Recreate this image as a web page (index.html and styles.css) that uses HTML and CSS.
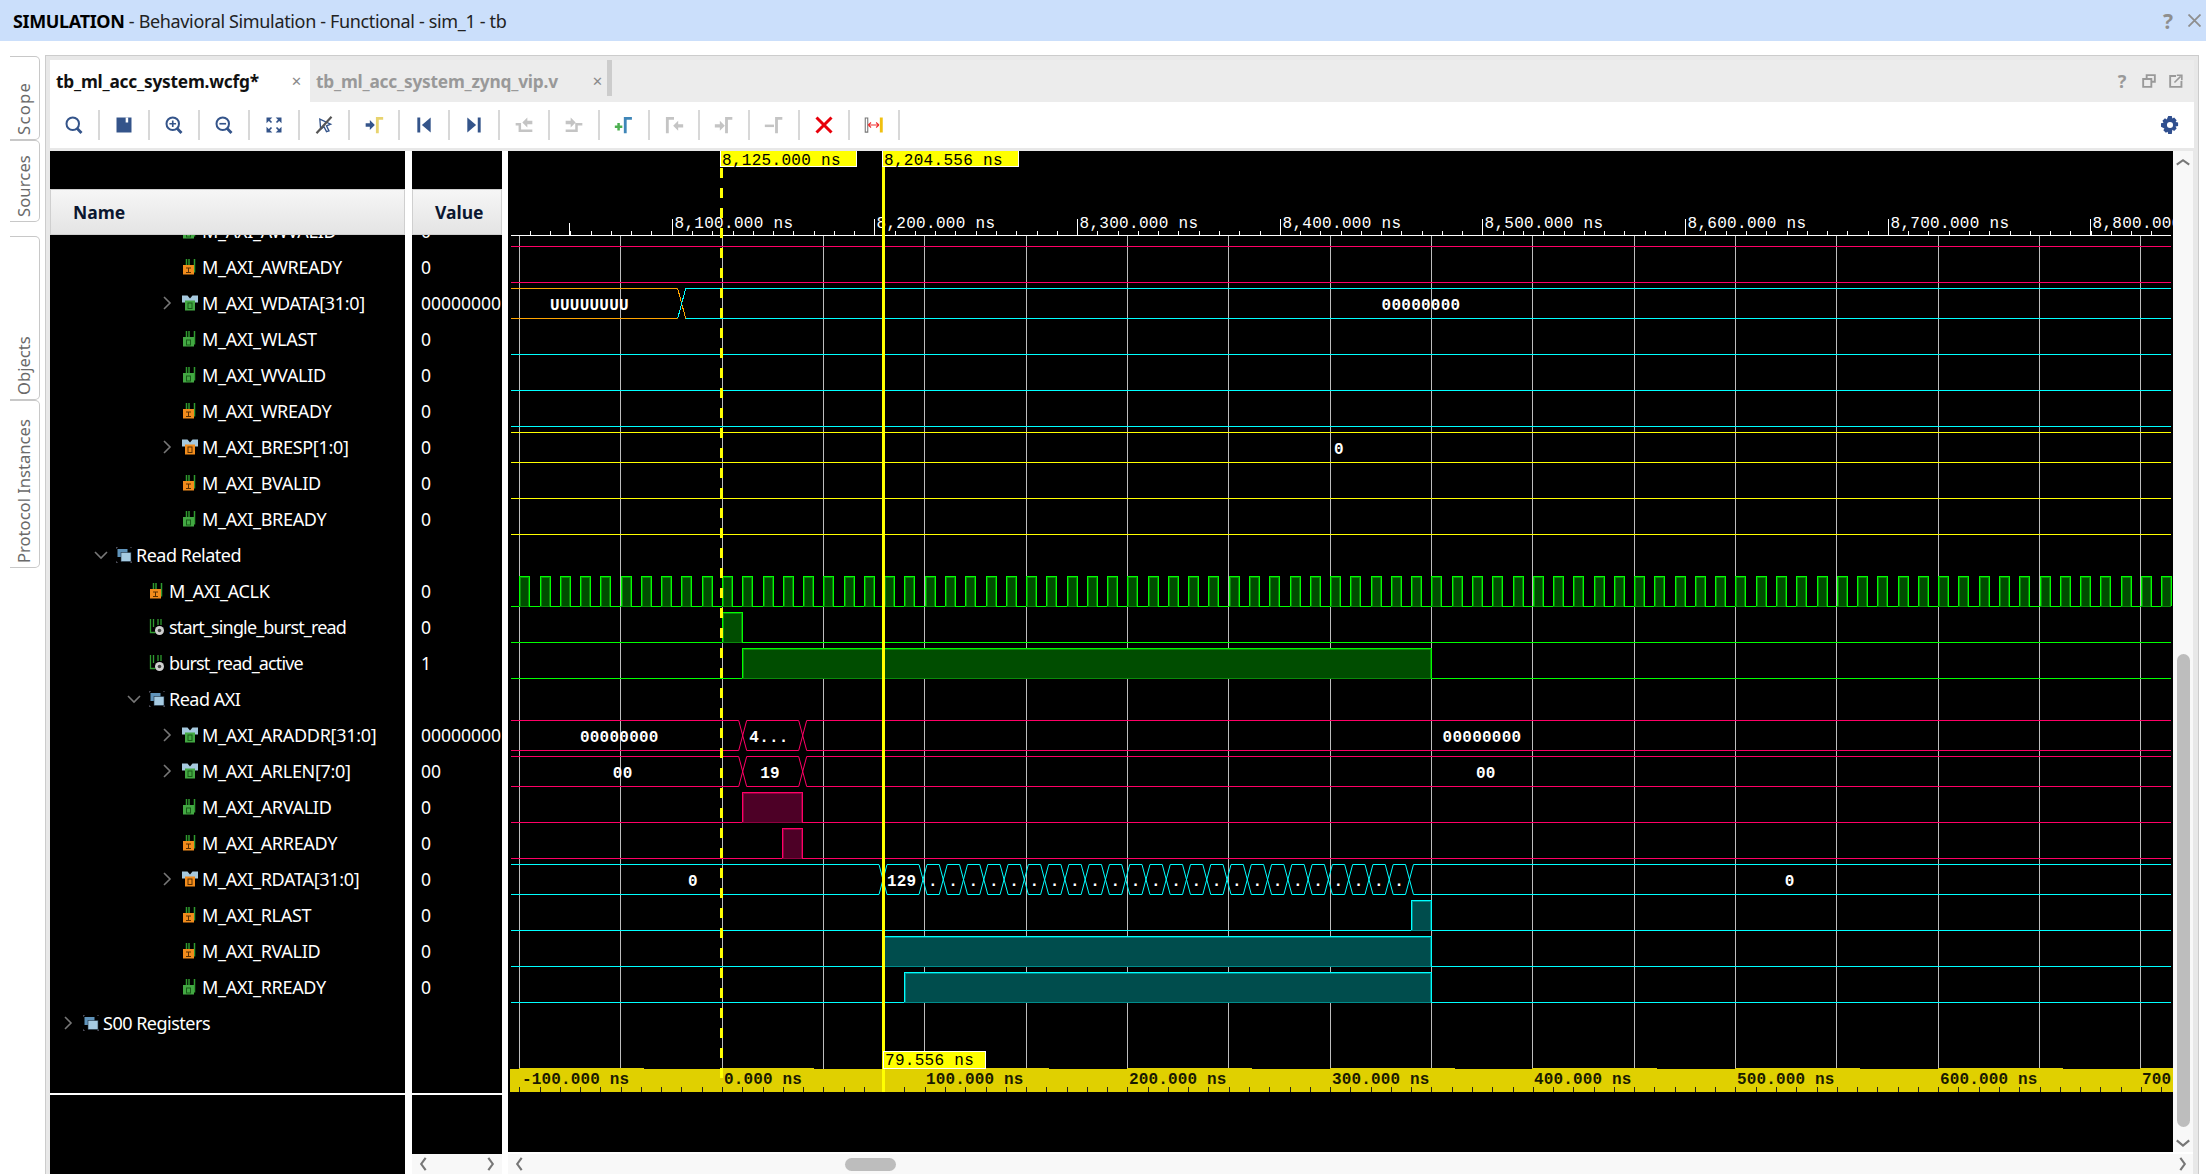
FILE: index.html
```html
<!DOCTYPE html>
<html>
  <head>
    <meta charset="utf-8">
    <title>SIMULATION</title>
    <link rel="stylesheet" href="styles.css">
  </head>
  <body>
    <svg class="defs">
      <symbol id="chev-r" viewBox="0 0 12 14"><path d="M3 1l6 6-6 6" fill="none" stroke="#777" stroke-width="1.6"/></symbol>
      <symbol id="chev-d" viewBox="0 0 14 12"><path d="M1 3l6 6 6-6" fill="none" stroke="#777" stroke-width="1.6"/></symbol>
      <symbol id="sig-out" viewBox="0 0 16 16">
        <path d="M4.5 0v6M12.5 0v13.500M7 0v6" fill="none" stroke="#2f9a2f" stroke-width="1.5"/>
        <rect x="1" y="6" width="11" height="9.500" fill="#43a843"/>
        <rect x="4.500" y="9" width="4" height="5" fill="none" stroke="#185c18"/>
      </symbol>
      <symbol id="sig-in" viewBox="0 0 16 16">
        <path d="M4.500 0v6M12.500 0v13.500M7 0v6" fill="none" stroke="#2f9a2f" stroke-width="1.500"/>
        <rect x="1" y="6" width="11" height="9.500" fill="#f28c1c"/>
        <path d="M4 9h5M6.500 9v4.500M4 13.500h5" fill="none" stroke="#5a3000"/>
      </symbol>
      <symbol id="bus-out" viewBox="0 0 16 15">
        <path d="M0 0h5.500l2.500 3 2.500-3H16v7H0z" fill="#a6c9de"/>
        <rect x="3" y="5" width="10" height="10" fill="#43a843"/>
        <rect x="6" y="7.500" width="4" height="5.500" fill="none" stroke="#185c18"/>
      </symbol>
      <symbol id="bus-in" viewBox="0 0 16 15">
        <path d="M0 0h5.500l2.500 3 2.500-3H16v7H0z" fill="#a6c9de"/>
        <rect x="3" y="5" width="10" height="10" fill="#f28c1c"/>
        <rect x="6" y="7.500" width="4" height="5.500" fill="none" stroke="#5a3000"/>
      </symbol>
      <symbol id="sig-reg" viewBox="0 0 16 16">
        <path d="M1.500 0v13.500h5M4.500 0v8M9 0v6M12 0v6" fill="none" stroke="#2f9a2f" stroke-width="1.300"/>
        <circle cx="10.500" cy="11.500" r="4.500" fill="#d0d0d0"/>
        <circle cx="10.500" cy="11.500" r="1.800" fill="#444"/>
      </symbol>
      <symbol id="group" viewBox="0 0 16 16">
        <path d="M0 0h2M14 0h2M0 16h2M14 16h2M0 0v2M0 14v2M16 14v2" stroke="#667" fill="none"/>
        <rect x="1.500" y="2" width="10" height="8" fill="#5f93ba"/>
        <rect x="5" y="5.500" width="10" height="9" fill="#a6cbe2" stroke="#234" stroke-width=".6"/>
      </symbol>
      <symbol id="glass" viewBox="0 0 24 24">
        <circle cx="10.500" cy="10.500" r="7.500" fill="none" stroke="#34548a" stroke-width="2.400"/>
        <path d="M15.500 16l5.500 5.500" stroke="#34548a" stroke-width="3.400"/>
      </symbol>
    </svg>

    <div class="titlebar">
      <div class="title"><b>SIMULATION</b> - Behavioral Simulation - Functional - sim_1 - tb</div>
      <div class="win-btns">
        <span class="win-help">?</span>
        <svg width="13" height="13" viewBox="0 0 13 13"><path d="M.5.500l12 12M12.500.500l-12 12" stroke="#8e8e8e" stroke-width="1.800"/></svg>
      </div>
    </div>

    <div class="main">
      <div class="side">
        <div class="side-tab t-scope"><span>Scope</span></div>
        <div class="side-tab t-sources"><span>Sources</span></div>
        <div class="side-tab t-objects"><span>Objects</span></div>
        <div class="side-tab t-proto"><span>Protocol Instances</span></div>
      </div>

      <div class="panel">
        <div class="tabstrip">
          <div class="tab active"><span>tb_ml_acc_system.wcfg*</span><i>✕</i></div>
          <div class="tab other"><span>tb_ml_acc_system_zynq_vip.v</span><i>✕</i></div>
          <div class="grip"></div>
          <div class="panel-btns">
            <span class="p-help">?</span>
            <svg width="14" height="14" viewBox="0 0 18 18"><path d="M6 5V1.500h10.500V10H12.500M1.500 6.500H12V16.500H1.500z" fill="none" stroke="#999" stroke-width="2.400"/></svg>
            <svg width="14" height="14" viewBox="0 0 18 18"><path d="M9 2.500H1.500v14H16V9" fill="none" stroke="#999" stroke-width="2.400"/><path d="M7 11l8-8M10 1.500h6.500V8" fill="none" stroke="#999" stroke-width="2"/></svg>
          </div>
        </div>

        <div class="toolbar">
          <div class="tool"><svg viewBox="0 0 24 24"><use href="#glass"/></svg></div>
          <div class="tool"><svg viewBox="0 0 24 24"><path d="M3 3h18v18H3z" fill="#34548a"/><path d="M14 3h3v6h-3z" fill="#fff"/></svg></div>
          <div class="tool"><svg viewBox="0 0 24 24"><use href="#glass"/><path d="M6.500 10.500h8M10.500 6.500v8" stroke="#34548a" stroke-width="2"/></svg></div>
          <div class="tool"><svg viewBox="0 0 24 24"><use href="#glass"/><path d="M6.500 10.500h8" stroke="#34548a" stroke-width="2"/></svg></div>
          <div class="tool"><svg viewBox="0 0 24 24"><g fill="#34548a"><path d="M3 3h7L3 10zM21 3h-7l7 7zM3 21h7l-7-7zM21 21h-7l7-7z"/></g><path d="M5 5l4 4M19 5l-4 4M5 19l4-4M19 19l-4-4" stroke="#34548a" stroke-width="2"/></svg></div>
          <div class="tool"><svg viewBox="0 0 24 24"><path d="M7 5l13 6-5 2 3 6-3 1-3-6-4 3z" fill="#fff" stroke="#34548a" stroke-width="1.600"/><path d="M21 2L3 22" stroke="#555" stroke-width="2.600"/></svg></div>
          <div class="tool"><svg viewBox="0 0 24 24"><path d="M2 10h5V6l6 6-6 6v-4H2z" fill="#34548a"/><path d="M16 22V4h7" fill="none" stroke="#e8d36e" stroke-width="3.400"/></svg></div>
          <div class="tool"><svg viewBox="0 0 24 24"><path d="M4 3h3.500v18H4z" fill="#34548a"/><path d="M20 3v18L9.500 12z" fill="#34548a"/></svg></div>
          <div class="tool"><svg viewBox="0 0 24 24"><path d="M20 3h-3.500v18H20z" fill="#34548a"/><path d="M4 3v18l10.500-9z" fill="#34548a"/></svg></div>
          <div class="tool"><svg viewBox="0 0 24 24"><path d="M2 11h5v8h15" fill="none" stroke="#c4c4c4" stroke-width="3"/><path d="M22 7h-6V3l-6 6 6 6v-4h6z" fill="#c4c4c4"/></svg></div>
          <div class="tool"><svg viewBox="0 0 24 24"><path d="M2 19h13v-8h7" fill="none" stroke="#c4c4c4" stroke-width="3"/><path d="M2 7h6V3l6 6-6 6v-4H2z" fill="#c4c4c4"/></svg></div>
          <div class="tool"><svg viewBox="0 0 24 24"><path d="M1 14h9M5.500 9.500v9" stroke="#4caf50" stroke-width="3"/><path d="M13.500 22V4h8" fill="none" stroke="#3f86b8" stroke-width="3.400"/></svg></div>
          <div class="tool"><svg viewBox="0 0 24 24"><path d="M4 22V4h8" fill="none" stroke="#c4c4c4" stroke-width="3.400"/><path d="M23 11h-6V7l-6 6 6 6v-4h6z" fill="#c4c4c4"/></svg></div>
          <div class="tool"><svg viewBox="0 0 24 24"><path d="M1 11h6V7l6 6-6 6v-4H1z" fill="#c4c4c4"/><path d="M15 22V4h7" fill="none" stroke="#c4c4c4" stroke-width="3.400"/></svg></div>
          <div class="tool"><svg viewBox="0 0 24 24"><path d="M1 13h11" stroke="#c4c4c4" stroke-width="3"/><path d="M15 22V4h7" fill="none" stroke="#c4c4c4" stroke-width="3.400"/></svg></div>
          <div class="tool"><svg viewBox="0 0 24 24"><path d="M3 3l18 18M21 3L3 21" stroke="#e8000b" stroke-width="3.600"/></svg></div>
          <div class="tool"><svg viewBox="0 0 24 24"><path d="M1.500 3.500h3v17h-3z" fill="none" stroke="#777" stroke-width="1.300"/><path d="M5 12h13M5 12l3.500-3M5 12l3.500 3M18 12l-3.500-3M18 12l-3.500 3" fill="none" stroke="#f03030" stroke-width="1.300"/><path d="M19 3h3.500v18H19z" fill="#f0c010"/></svg></div>
          <div class="tool-right"><svg width="18" height="18" viewBox="0 0 20 20"><path fill="#2f4f8f" d="M8 0h4l.6 2.800 2-1 2.800 2.800-1.200 2 2.800.6v4l-2.800.6 1.200 2-2.800 2.800-2-1.200L12 20H8l-.6-2.600-2 1.200-2.800-2.800 1.200-2L0 12V8l2.800-.6-1.200-2 2.800-2.800 2 1.200z"/><circle cx="10" cy="10" r="3.400" fill="#fff"/></svg></div>
        </div>

        <div class="view">
          <div class="col col-name">
            <div class="cap"></div>
            <div class="head">Name</div>
            <div class="list">
              <div class="rows">
                <div class="row l4"><i class="chev"></i><svg class="ic"><use href="#sig-out"/></svg><span>M_AXI_AWVALID</span></div>
                <div class="row l4"><i class="chev"></i><svg class="ic"><use href="#sig-in"/></svg><span>M_AXI_AWREADY</span></div>
                <div class="row l4"><svg class="chev"><use href="#chev-r"/></svg><svg class="ic"><use href="#bus-out"/></svg><span>M_AXI_WDATA[31:0]</span></div>
                <div class="row l4"><i class="chev"></i><svg class="ic"><use href="#sig-out"/></svg><span>M_AXI_WLAST</span></div>
                <div class="row l4"><i class="chev"></i><svg class="ic"><use href="#sig-out"/></svg><span>M_AXI_WVALID</span></div>
                <div class="row l4"><i class="chev"></i><svg class="ic"><use href="#sig-in"/></svg><span>M_AXI_WREADY</span></div>
                <div class="row l4"><svg class="chev"><use href="#chev-r"/></svg><svg class="ic"><use href="#bus-in"/></svg><span>M_AXI_BRESP[1:0]</span></div>
                <div class="row l4"><i class="chev"></i><svg class="ic"><use href="#sig-in"/></svg><span>M_AXI_BVALID</span></div>
                <div class="row l4"><i class="chev"></i><svg class="ic"><use href="#sig-out"/></svg><span>M_AXI_BREADY</span></div>
                <div class="row l2 lower"><svg class="chev"><use href="#chev-d"/></svg><svg class="ic"><use href="#group"/></svg><span>Read Related</span></div>
                <div class="row l3"><i class="chev"></i><svg class="ic"><use href="#sig-in"/></svg><span>M_AXI_ACLK</span></div>
                <div class="row l3 lowest"><i class="chev"></i><svg class="ic"><use href="#sig-reg"/></svg><span>start_single_burst_read</span></div>
                <div class="row l3 lowest"><i class="chev"></i><svg class="ic"><use href="#sig-reg"/></svg><span>burst_read_active</span></div>
                <div class="row l3 lower"><svg class="chev"><use href="#chev-d"/></svg><svg class="ic"><use href="#group"/></svg><span>Read AXI</span></div>
                <div class="row l4"><svg class="chev"><use href="#chev-r"/></svg><svg class="ic"><use href="#bus-out"/></svg><span>M_AXI_ARADDR[31:0]</span></div>
                <div class="row l4"><svg class="chev"><use href="#chev-r"/></svg><svg class="ic"><use href="#bus-out"/></svg><span>M_AXI_ARLEN[7:0]</span></div>
                <div class="row l4"><i class="chev"></i><svg class="ic"><use href="#sig-out"/></svg><span>M_AXI_ARVALID</span></div>
                <div class="row l4"><i class="chev"></i><svg class="ic"><use href="#sig-in"/></svg><span>M_AXI_ARREADY</span></div>
                <div class="row l4"><svg class="chev"><use href="#chev-r"/></svg><svg class="ic"><use href="#bus-in"/></svg><span>M_AXI_RDATA[31:0]</span></div>
                <div class="row l4"><i class="chev"></i><svg class="ic"><use href="#sig-in"/></svg><span>M_AXI_RLAST</span></div>
                <div class="row l4"><i class="chev"></i><svg class="ic"><use href="#sig-in"/></svg><span>M_AXI_RVALID</span></div>
                <div class="row l4"><i class="chev"></i><svg class="ic"><use href="#sig-out"/></svg><span>M_AXI_RREADY</span></div>
                <div class="row l1 lower"><svg class="chev"><use href="#chev-r"/></svg><svg class="ic"><use href="#group"/></svg><span>S00 Registers</span></div>
              </div>
            </div>
            <div class="rule"></div>
            <div class="rest"></div>
          </div>

          <div class="col col-value">
            <div class="cap"></div>
            <div class="head">Value</div>
            <div class="list">
              <div class="rows">
                <div class="row">0</div>
                <div class="row">0</div>
                <div class="row">00000000</div>
                <div class="row">0</div>
                <div class="row">0</div>
                <div class="row">0</div>
                <div class="row">0</div>
                <div class="row">0</div>
                <div class="row">0</div>
                <div class="row"></div>
                <div class="row">0</div>
                <div class="row">0</div>
                <div class="row">1</div>
                <div class="row"></div>
                <div class="row">00000000</div>
                <div class="row">00</div>
                <div class="row">0</div>
                <div class="row">0</div>
                <div class="row">0</div>
                <div class="row">0</div>
                <div class="row">0</div>
                <div class="row">0</div>
              </div>
            </div>
            <div class="rule"></div>
            <div class="rest"></div>
            <div class="hscroll val-scroll">
              <svg class="sc-arrow" viewBox="0 0 12 18"><path d="M9 2L4 9l5 7" fill="none" stroke="#777" stroke-width="2.400"/></svg>
              <svg class="sc-arrow" viewBox="0 0 12 18"><path d="M3 2l5 7-5 7" fill="none" stroke="#777" stroke-width="2.400"/></svg>
            </div>
          </div>

          <div class="col col-wave">
            <div class="wave-main">
              <svg id="wave" class="wave" viewBox="508 151 1665 1001" width="1665" height="1001"></svg>
              <div class="vscroll">
                <svg class="sc-up" viewBox="0 0 18 12"><path d="M2 9l7-5 7 5" fill="none" stroke="#777" stroke-width="2.400"/></svg>
                <div class="v-thumb"></div>
                <svg class="sc-down" viewBox="0 0 18 12"><path d="M2 3l7 6 7-6" fill="none" stroke="#777" stroke-width="2.400"/></svg>
              </div>
            </div>
            <div class="hscroll wave-scroll">
              <svg class="sc-arrow" viewBox="0 0 12 18"><path d="M9 2L4 9l5 7" fill="none" stroke="#777" stroke-width="2.400"/></svg>
              <div class="h-thumb"></div>
              <svg class="sc-arrow sc-end" viewBox="0 0 12 18"><path d="M3 2l5 7-5 7" fill="none" stroke="#777" stroke-width="2.400"/></svg>
            </div>
          </div>
        </div>
      </div>
    </div>
    <script src="wave.js"></script>
  </body>
</html>
```

FILE: styles.css
```css
*{
  box-sizing: border-box;
}
body{
  margin: 0;
  width: 2206px;
  height: 1174px;
  overflow: hidden;
  background: #fff;
  font-family: "Noto Sans", "Open Sans", sans-serif;
  font-size: 18px;
  display: flex;
  flex-direction: column;
}
.defs{
  display: none;
}

/* title bar */
.titlebar{
  height: 41px;
  background: #cbdffb;
  display: flex;
  align-items: center;
  justify-content: space-between;
  padding: 0 5px 0 13px;
  color: #222;
  flex: none;
}
.title{
  font-size: 18px;
  letter-spacing: -0.35px;
}
.title b{
  color: #000;
}
.win-btns{
  display: flex;
  align-items: center;
  gap: 15px;
  color: #8e8e8e;
}
.win-help{
  font-weight: bold;
  font-size: 21px;
}

.main{
  flex: 1;
  display: flex;
  padding-top: 14px;
  min-height: 0;
}

/* left side tabs */
.side{
  width: 45px;
  padding-top: 1px;
  padding-left: 10px;
  flex: none;
}
.side-tab{
  width: 30px;
  border: 1px solid #c8c8c8;
  border-right: 0;
  border-top-left-radius: 5px;
  border-bottom-left-radius: 5px;
  writing-mode: vertical-rl;
  transform: rotate(180deg);
  color: #6a6a6a;
  background: #fff;
  padding-top: 4px;
  font-size: 16.600px;
  line-height: 28px;
  white-space: nowrap;
}
.t-scope{
  height: 84px;
  letter-spacing: 1.300px;
}
.t-sources{
  height: 82px;
  letter-spacing: 0.1px;
}
.t-objects{
  height: 164px;
  margin-top: 14px;
}
.t-proto{
  height: 168px;
}

/* the window */
.panel{
  width: 2154px;
  border: 1px solid #ccc;
  border-bottom: 0;
  background: #e8e8e8;
  padding: 4px 4px 0 4px;
  display: flex;
  flex-direction: column;
  min-height: 0;
}
.tabstrip{
  height: 42px;
  background: #ececec;
  display: flex;
  flex: none;
}
.tab{
  display: flex;
  align-items: center;
  font-weight: bold;
  font-size: 17.300px;
  letter-spacing: -0.2px;
  padding-left: 6px;
  position: relative;
}
.tab i{
  font-style: normal;
  font-weight: normal;
  color: #8a8a8a;
  font-size: 13px;
  margin-left: auto;
}
.tab.active{
  width: 260px;
  background: #fff;
  color: #111;
  padding-right: 8px;
}
.tab.other{
  width: 297px;
  color: #999;
  padding-right: 4px;
}
.grip{
  width: 5px;
  height: 36px;
  background: #ccc;
}
.panel-btns{
  margin-left: auto;
  display: flex;
  align-items: center;
  gap: 13px;
  padding-right: 11px;
}
.p-help{
  font-weight: bold;
  font-size: 18px;
  color: #999;
  width: 14px;
  text-align: center;
}

.toolbar{
  height: 46px;
  background: #fff;
  display: flex;
  align-items: center;
  flex: none;
}
.tool{
  width: 50px;
  height: 30px;
  border-right: 2px solid #d8d8d8;
  display: flex;
  align-items: center;
  justify-content: center;
}
.tool svg{
  width: 20px;
  height: 20px;
}
.tool-right{
  margin-left: auto;
  padding-right: 15px;
  display: flex;
}

.view{
  flex: 1;
  min-height: 0;
  margin-top: 3px;
  margin-right: 1px;
  background: #fff;
  display: flex;
}
.col{
  display: flex;
  flex-direction: column;
}
.col-name{
  width: 355px;
}
.col-value{
  width: 90px;
  margin-left: 7px;
}
.col-wave{
  width: 1685px;
  margin-left: 6px;
}
.cap{
  height: 38px;
  background: #000;
}
.head{
  height: 46px;
  border: 1px solid #cfcfcf;
  background: linear-gradient(#f6f6f6, #e4e4e4);
  font-weight: bold;
  font-size: 17.500px;
  color: #0b1730;
  display: flex;
  align-items: center;
  padding-left: 22px;
}
.list{
  height: 858px;
  background: #000;
  overflow: hidden;
  color: #fff;
}
.rows{
  margin-top: -22px;
}
.row{
  height: 36px;
  display: flex;
  align-items: center;
  white-space: nowrap;
  letter-spacing: -0.3px;
}
.row.lower{
  letter-spacing: -0.5px;
}
.row.lowest{
  letter-spacing: -0.85px;
}
.col-value .row{
  padding-left: 9px;
  font-size: 17.500px;
  letter-spacing: 0;
}
.l1{
  padding-left: 9px;
}
.l2{
  padding-left: 42px;
}
.l3{
  padding-left: 75px;
}
.l4{
  padding-left: 108px;
}
.chev{
  width: 14px;
  height: 14px;
  margin: 0 8px 0 2px;
  flex: none;
}
.ic{
  width: 16px;
  height: 16px;
  margin-right: 4px;
  flex: none;
}
.rule{
  height: 2px;
  background: #fff;
}
.rest{
  flex: 1;
  background: #000;
}

/* scrollbars */
.hscroll{
  height: 20px;
  background: #f8f8f8;
  display: flex;
  align-items: center;
  flex: none;
}
.val-scroll{
  justify-content: space-between;
  padding: 0 5px;
}
.sc-arrow{
  width: 12px;
  height: 16px;
}
.wave-scroll{
  margin-top: 2px;
  padding-left: 5px;
}
.h-thumb{
  width: 51px;
  height: 13px;
  border-radius: 7px;
  background: #bdbdbd;
  margin-left: 320px;
}
.sc-end{
  margin-left: auto;
  margin-right: 4px;
}
.wave-main{
  height: 1001px;
  display: flex;
}
.wave{
  display: block;
  background: #000;
  flex: none;
}
.vscroll{
  width: 20px;
  background: #f8f8f8;
  display: flex;
  flex-direction: column;
  align-items: center;
}
.sc-up{
  width: 16px;
  height: 12px;
  margin-top: 5px;
}
.v-thumb{
  width: 13px;
  height: 473px;
  border-radius: 7px;
  background: #bdbdbd;
  margin-top: auto;
}
.sc-down{
  width: 16px;
  height: 12px;
  margin: 10px 0 3px 0;
}

/* wave canvas */
.grid{
  stroke: #bdbdbd;
}
.w{
  fill: none;
  stroke-width: 1;
}
.x{
  fill: none;
  stroke-width: 1;
}
.pink{
  stroke: #ff0066;
}
.cyan{
  stroke: #00ffff;
}
.green{
  stroke: #00ff00;
}
.yellow{
  stroke: #ffff00;
}
.orange{
  stroke: #ffa500;
}
.fill-green{
  fill: #004d00;
}
.fill-pink{
  fill: #4d0026;
}
.fill-cyan{
  fill: #004d4d;
}
.dim-green{
  stroke: #0a8a0a;
}
.dim-pink{
  stroke: #8f0040;
}
.dim-cyan{
  stroke: #008c8c;
}
.val,.rul{
  font-family: "Liberation Mono", monospace;
  font-weight: bold;
  font-size: 16px;
  letter-spacing: 0.25px;
  fill: #fff;
}
.rul{
  font-weight: normal;
  letter-spacing: 0.3px;
}
.tick{
  stroke: #fff;
}
.mark-box{
  fill: #ffff00;
  stroke: #fff;
}
.mark-txt{
  font-family: "Liberation Mono", monospace;
  font-size: 16px;
  letter-spacing: 0.3px;
  fill: #000;
}
.cursor{
  fill: #ffff00;
}
.band{
  fill: #e0d000;
}
.band-txt{
  font-family: "Liberation Mono", monospace;
  font-size: 16px;
  font-weight: bold;
  letter-spacing: 0.15px;
  fill: #1a1a00;
}
.band-tick{
  stroke: #222;
}
```

FILE: wave.js
```js
var X0 = 511, X1 = 2171, out = "";

function line(x1, y1, x2, y2, cls)
{
  out += '<path shape-rendering="crispEdges" class="' + cls + '" d="M' + x1 + ' ' + y1 + 'L' + x2 + ' ' + y2 + '"/>';
}
function txt(x, y, s, cls, anchor)
{
  out += '<text x="' + x + '" y="' + y + '" class="' + cls + '" text-anchor="' + (anchor || "middle") + '">' + s + '</text>';
}
function flat(y, color)
{
  line(X0, y + 0.5, X1, y + 0.5, "w " + color);
}
// a high pulse sitting on a baseline: bright edge, a dim row inside it, dim at the bottom
function pulse(x1, x2, base, color)
{
  var top = base - 30;
  out += '<rect shape-rendering="crispEdges" class="fill-' + color + '" x="' + x1 + '" y="' + top + '" width="' + (x2 - x1) + '" height="' + (base - top) + '"/>';
  line(x1, base + 0.5, x2, base + 0.5, "w dim-" + color);
  out += '<path shape-rendering="crispEdges" class="w dim-' + color + '" d="M' + (x1 + 1.5) + ' ' + base + 'V' + (top + 1.5) + 'H' + (x2 - 0.5) + 'V' + base + '"/>';
  out += '<path shape-rendering="crispEdges" class="w ' + color + '" d="M' + (x1 + 0.5) + ' ' + base + 'V' + (top + 0.5) + 'H' + (x2 + 0.5) + 'V' + base + '"/>';
}
// a bus between top and bottom, with crossings at cuts
function bus(top, cuts, color, from, to)
{
  var bot = top + 30, h = 4, d = "", a = from, i;
  top += 0.5;
  bot += 0.5;
  for(i = 0; i <= cuts.length; i++){
    var b = i < cuts.length ? cuts[i] - h : to;
    d += "M" + a + " " + top + "H" + b + "M" + a + " " + bot + "H" + b;
    if(i < cuts.length){
      var t = cuts[i];
      d += "M" + (t - h) + " " + top + "L" + (t + h) + " " + bot;
      d += "M" + (t - h) + " " + bot + "L" + (t + h) + " " + top;
      a = t + h;
    }
  }
  out += '<path class="x ' + color + '" d="' + d + '"/>';
}

var i, x;

// grid
for(i = 0; i < 17; i++){
  x = Math.round(519 + 101.34 * i) + 0.5;
  line(x, 236, x, 1069, "grid");
}

// top ruler
line(X0, 235.5, X1, 235.5, "tick");
for(x = 671.7 - 20.27 * 7; x < X1; x += 20.27){
  line(Math.round(x) + 0.5, 231, Math.round(x) + 0.5, 235, "tick");
}
line(569.5, 223, 569.5, 235, "tick");
for(i = 0; i < 8; i++){
  x = Math.round(671.7 + 202.67 * i) + 0.5;
  line(x, 219, x, 235, "tick");
  txt(x + 2, 228, "8," + (100 + i * 100) + ".000 ns", "rul", "start");
}

// write side
flat(246, "pink");
flat(282, "pink");
bus(288, [], "orange", X0, 677.7);
line(677.7, 288.5, 685.7, 318.5, "x orange");
line(677.7, 318.5, 685.7, 288.5, "x cyan");
bus(288, [], "cyan", 685.7, X1);
flat(354, "cyan");
flat(390, "cyan");
flat(426, "cyan");
bus(432, [], "yellow", X0, X1);
flat(498, "yellow");
flat(534, "yellow");
txt(589.5, 309.5, "UUUUUUUU", "val");
txt(1421, 309.5, "00000000", "val");
txt(1339, 453.5, "0", "val");

// clock
flat(606, "green");
for(x = 519.3; x < X1 - 6; x += 20.27){
  pulse(Math.round(x), Math.round(x + 10), 606, "green");
}
// start_single_burst_read, burst_read_active
line(X0, 642.5, 722, 642.5, "w green");
pulse(722, 742, 642, "green");
line(742, 642.5, X1, 642.5, "w green");
line(X0, 678.5, 742, 678.5, "w green");
pulse(742, 1431, 678, "green");
line(1431, 678.5, X1, 678.5, "w green");

// read address
bus(720, [742.7, 802.7], "pink", X0, X1);
bus(756, [742.7, 802.7], "pink", X0, X1);
txt(619.3, 741.5, "00000000", "val");
txt(769, 741.5, "4...", "val");
txt(1482, 741.5, "00000000", "val");
txt(622.7, 777.5, "00", "val");
txt(770, 777.5, "19", "val");
txt(1485.8, 777.5, "00", "val");
line(X0, 822.5, 742, 822.5, "w pink");
pulse(742, 802, 822, "pink");
line(802, 822.5, X1, 822.5, "w pink");
line(X0, 858.5, 782, 858.5, "w pink");
pulse(782, 802, 858, "pink");
line(802, 858.5, X1, 858.5, "w pink");

// read data, the bursts of 20.27 wide cells
var cuts = [883];
for(i = 0; i < 25; i++){
  cuts.push(923 + 20.27 * i);
}
bus(864, cuts, "cyan", X0, X1);
txt(693, 885.5, "0", "val");
txt(901.7, 885.5, "129", "val");
txt(1789.7, 885.5, "0", "val");
for(i = 0; i < 24; i++){
  txt(933 + 20.27 * i, 885.5, ".", "val");
}
line(X0, 930.5, 1411, 930.5, "w cyan");
pulse(1411, 1431, 930, "cyan");
line(1431, 930.5, X1, 930.5, "w cyan");
line(X0, 966.5, 883, 966.5, "w cyan");
pulse(883, 1431, 966, "cyan");
line(1431, 966.5, X1, 966.5, "w cyan");
line(X0, 1002.5, 904, 1002.5, "w cyan");
pulse(904, 1431, 1002, "cyan");
line(1431, 1002.5, X1, 1002.5, "w cyan");

// bottom ruler
out += '<rect class="band" x="510" y="1069" width="1663" height="23"/>';
for(x = 722 - 20.27 * 10; x < 2173; x += 20.27){
  line(Math.round(x) + 0.5, 1087, Math.round(x) + 0.5, 1092, "band-tick");
}
for(i = 0; i < 9; i++){
  x = Math.round(519 + 202.68 * i);
  out += '<rect class="band" x="' + x + '" y="1068" width="' + (i == 1 ? 92 : 125) + '" height="1"/>';
  txt(x + (i == 0 ? 3 : 2), 1084, (i - 1) * 100 + ".000 ns", "band-txt", "start");
}

// cursors
for(x = 168; x < 1080; x += 20){
  out += '<rect class="cursor" x="720" y="' + x + '" width="3" height="10"/>';
}
out += '<rect class="cursor" x="882" y="167" width="3" height="925"/>';
out += '<rect class="mark-box" x="720.5" y="150.5" width="136" height="16"/>';
txt(722, 165, "8,125.000 ns", "mark-txt", "start");
out += '<rect class="mark-box" x="882.5" y="150.5" width="136" height="16"/>';
txt(884, 165, "8,204.556 ns", "mark-txt", "start");
out += '<rect class="mark-box" x="883.5" y="1051.5" width="102" height="17"/>';
txt(885, 1065, "79.556 ns", "mark-txt", "start");

document.getElementById("wave").innerHTML = out;
```
